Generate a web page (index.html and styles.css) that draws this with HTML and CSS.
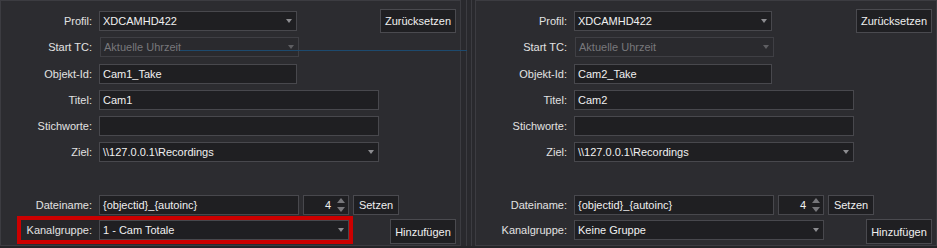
FILE: index.html
```html
<!DOCTYPE html>
<html lang="de">
<head>
    <meta charset="UTF-8">
    <title>Aufnahme Einstellungen</title>
    <link rel="stylesheet" href="styles.css">
</head>
<body>
<div class="recorder">
    <div class="panel">
        <div class="row">
            <span class="lbl">Profil:</span>
            <div class="field combo w198">XDCAMHD422</div>
            <button class="btn reset">Zurücksetzen</button>
        </div>
        <div class="row r2">
            <span class="lbl">Start TC:</span>
            <div class="field combo off">Aktuelle Uhrzeit</div>
        </div>
        <div class="row">
            <span class="lbl">Objekt-Id:</span>
            <div class="field w198">Cam1_Take</div>
        </div>
        <div class="row">
            <span class="lbl">Titel:</span>
            <div class="field w280">Cam1</div>
        </div>
        <div class="row">
            <span class="lbl">Stichworte:</span>
            <div class="field w280"></div>
        </div>
        <div class="row">
            <span class="lbl">Ziel:</span>
            <div class="field combo w280">\\127.0.0.1\Recordings</div>
        </div>
        <div class="row r7">
            <span class="lbl">Dateiname:</span>
            <div class="field w200">{objectid}_{autoinc}</div>
            <div class="field spin">4<span class="arrows"><i class="up"></i><i class="down"></i></span></div>
            <button class="btn set">Setzen</button>
        </div>
        <div class="row">
            <div class="group marked">
                <span class="lbl">Kanalgruppe:</span>
                <div class="field combo w250">1 - Cam Totale</div>
            </div>
            <button class="btn add">Hinzufügen</button>
        </div>
    </div>

    <div class="splitter"><span></span></div>

    <div class="panel second">
        <div class="row">
            <span class="lbl">Profil:</span>
            <div class="field combo w198">XDCAMHD422</div>
            <button class="btn reset">Zurücksetzen</button>
        </div>
        <div class="row r2">
            <span class="lbl">Start TC:</span>
            <div class="field combo off">Aktuelle Uhrzeit</div>
        </div>
        <div class="row">
            <span class="lbl">Objekt-Id:</span>
            <div class="field w198">Cam2_Take</div>
        </div>
        <div class="row">
            <span class="lbl">Titel:</span>
            <div class="field w280">Cam2</div>
        </div>
        <div class="row">
            <span class="lbl">Stichworte:</span>
            <div class="field w280"></div>
        </div>
        <div class="row">
            <span class="lbl">Ziel:</span>
            <div class="field combo w280">\\127.0.0.1\Recordings</div>
        </div>
        <div class="row r7">
            <span class="lbl">Dateiname:</span>
            <div class="field w200">{objectid}_{autoinc}</div>
            <div class="field spin">4<span class="arrows"><i class="up"></i><i class="down"></i></span></div>
            <button class="btn set">Setzen</button>
        </div>
        <div class="row">
            <div class="group">
                <span class="lbl">Kanalgruppe:</span>
                <div class="field combo w250">Keine Gruppe</div>
            </div>
            <button class="btn add">Hinzufügen</button>
        </div>
    </div>

    <div class="tc-line"></div>
</div>
</body>
</html>
```

FILE: styles.css
```css
body {
    margin: 0;
    background: #242427;
    font-family: "Liberation Sans", Arial, sans-serif;
    font-size: 11px;
    color: #ececec;
}

.recorder {
    position: relative;
    display: flex;
    width: 937px;
    height: 248px;
}

.panel {
    display: flex;
    flex-direction: column;
    box-sizing: border-box;
    width: 461px;
    height: 246px;
    padding: 10px 4px 0 0;
    background: #2c2c30;
    border: 1px solid #3c3c41;
}

.panel.second {
    width: 462px;
}

.splitter {
    width: 14px;
    height: 246px;
    box-sizing: border-box;
    padding-left: 5px;
    background: #29292d;
}

.splitter span {
    display: block;
    width: 6px;
    height: 100%;
    box-sizing: border-box;
    border-left: 1px solid #3c3c41;
    border-right: 1px solid #3c3c41;
}

.row {
    display: flex;
    align-items: center;
    height: 20px;
    margin-bottom: 6px;
}
.row.r2 { margin-bottom: 7px; }
.row.r7 { margin-top: 27px; margin-bottom: 5px; }

.lbl {
    flex: none;
    width: 91px;
    margin-right: 7px;
    text-align: right;
    color: #e2e2e2;
    white-space: nowrap;
}

.field {
    position: relative;
    flex: none;
    display: flex;
    align-items: center;
    box-sizing: border-box;
    height: 20px;
    padding: 0 3px;
    background: #1f1f22;
    border: 1px solid #48484d;
    color: #f0f0f0;
    white-space: nowrap;
}

.w198 { width: 198px; }
.w200 { width: 200px; }
.w250 { width: 250px; }
.w280 { width: 280px; }

.combo::after {
    content: "";
    position: absolute;
    right: 4px;
    top: 7px;
    border-left: 3.5px solid transparent;
    border-right: 3.5px solid transparent;
    border-top: 4px solid #8c8c90;
}

.combo.off {
    width: 199px;
    margin-left: 1px;
    background: #2a2a2e;
    border-color: #3f3f44;
    color: #78787c;
}
.combo.off::after { border-top-color: #5e5e62; }

.spin {
    width: 46px;
    margin-left: 4px;
    justify-content: flex-end;
    padding-right: 3px;
}

.arrows {
    display: flex;
    flex-direction: column;
    gap: 4px;
    margin-left: 6px;
}
.arrows i {
    display: block;
    border-left: 4px solid transparent;
    border-right: 4px solid transparent;
}
.arrows .up { border-bottom: 5px solid #77777b; }
.arrows .down { border-top: 5px solid #77777b; }

.group {
    display: flex;
    align-items: center;
    margin-left: 20px;
}
.group .lbl { width: 71px; }
.group.marked {
    background: #262629;
    outline: 4px solid #cc0000;
}

.btn {
    flex: none;
    box-sizing: border-box;
    margin-left: auto;
    padding: 0;
    background: #1f1f22;
    border: 1px solid #4a4a4f;
    color: #f0f0f0;
    font: inherit;
}
.btn.reset { width: 76px; height: 24px; }
.btn.set { width: 46px; height: 20px; margin-left: 4px; margin-top: -1px; }
.btn.add { width: 66px; height: 25px; margin-top: 3px; }

.tc-line {
    position: absolute;
    left: 180px;
    top: 50px;
    width: 287px;
    height: 1px;
    background: #1d4a6e;
}
```
